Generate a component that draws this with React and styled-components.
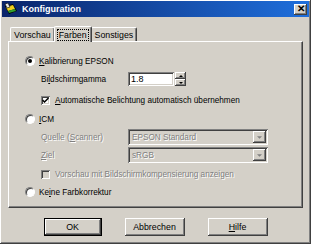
import React from "react";
import styled, { createGlobalStyle, css } from "styled-components";

const GlobalStyle = createGlobalStyle`
  html, body { margin: 0; padding: 0; background: #d4d0c8; }
  body { font-family: "Liberation Sans", Arial, sans-serif; font-size: 8.2px; color: #000; }
`;

const bevelOut = css`
  box-shadow: inset -1px -1px #404040, inset 1px 1px #fff, inset -2px -2px #808080, inset 2px 2px #d4d0c8;
`;
const bevelIn = css`
  box-shadow: inset 1px 1px #808080, inset -1px -1px #fff, inset 2px 2px #404040, inset -2px -2px #d4d0c8;
`;

const Window = styled.div`
  width: 311px;
  height: 244px;
  box-sizing: border-box;
  padding: 2px;
  background: #d4d0c8;
  display: flex;
  flex-direction: column;
  ${bevelOut}
`;

const TitleBar = styled.div`
  height: 16px;
  margin-top: -1px;
  display: flex;
  align-items: center;
  padding: 0 2px 0 2px;
  background: linear-gradient(to right, #0a246a, #1f6fdc);
  color: #fff;
`;

const TitleText = styled.span`
  font-weight: bold;
  font-size: 9px;
  margin-left: 4px;
  flex: 1;
`;

const CloseBtn = styled.div`
  width: 13px;
  height: 11px;
  background: #d4d0c8;
  ${bevelOut}
  display: flex;
  align-items: center;
  justify-content: center;
  color: #000;
  font-weight: bold;
  font-size: 10px;
  line-height: 1;
`;

const Body = styled.div`
  padding: 8px 6px 0 6px;
  display: flex;
  flex-direction: column;
`;

const TabRow = styled.div`
  display: flex;
  align-items: flex-end;
  padding-left: 2px;
  height: 16px;
`;

const Tab = styled.div`
  position: relative;
  box-sizing: border-box;
  height: ${(p) => (p.$active ? 16 : 14)}px;
  padding: 0 3px;
  margin: 0 ${(p) => (p.$active ? -1 : 0)}px ${(p) => (p.$active ? -1 : 0)}px;
  z-index: ${(p) => (p.$active ? 2 : 1)};
  background: #d4d0c8;
  border-top: 1px solid #fff;
  border-left: 1px solid #fff;
  border-right: 1px solid #404040;
  border-top-left-radius: 2px;
  border-top-right-radius: 2px;
  box-shadow: inset -1px 0 #808080;
  display: flex;
  align-items: center;
  font-size: 8.8px;
`;

const Focus = styled.span`
  outline: 1px dotted #000;
  padding: 0 1px;
`;

const Panel = styled.div`
  height: 167px;
  box-sizing: border-box;
  border-top: 1px solid #fff;
  border-left: 1px solid #fff;
  border-right: 1px solid #404040;
  border-bottom: 1px solid #404040;
  box-shadow: inset -1px -1px #808080;
  padding: 12px 0 0 16px;
  display: flex;
  flex-direction: column;
`;

const Row = styled.div`
  display: flex;
  align-items: center;
  height: ${(p) => p.$h || 14}px;
  margin-top: ${(p) => p.$mt || 0}px;
  padding-left: ${(p) => (p.$indent ? 16 : 0)}px;
`;

const Radio = styled.span`
  width: 10px;
  height: 10px;
  border-radius: 50%;
  box-sizing: border-box;
  background: #fff;
  border: 1px solid;
  border-color: #808080 #fff #fff #808080;
  box-shadow: inset 1px 1px #404040;
  display: flex;
  align-items: center;
  justify-content: center;
  margin-right: 4px;
  flex-shrink: 0;
  &::after {
    content: "";
    width: 4px;
    height: 4px;
    border-radius: 50%;
    background: ${(p) => (p.$checked ? "#000" : "transparent")};
  }
`;

const Check = styled.span`
  width: 9px;
  height: 9px;
  box-sizing: border-box;
  background: ${(p) => (p.$disabled ? "#d4d0c8" : "#fff")};
  ${bevelIn}
  margin-right: 5px;
  flex-shrink: 0;
  display: flex;
  align-items: center;
  justify-content: center;
`;

const Label = styled.span`
  white-space: nowrap;
  ${(p) =>
    p.$disabled &&
    css`
      color: #808080;
      text-shadow: 1px 1px #fff;
    `}
`;

const FieldLabel = styled(Label)`
  width: 87px;
`;

const TextInput = styled.div`
  width: 46px;
  height: 14px;
  box-sizing: border-box;
  background: #fff;
  ${bevelIn}
  padding: 0 3px;
  display: flex;
  align-items: center;
  font-size: 9px;
`;

const Spin = styled.div`
  display: flex;
  flex-direction: column;
  margin-left: 1px;
`;

const SpinBtn = styled.div`
  width: 11px;
  height: 7px;
  box-sizing: border-box;
  background: #d4d0c8;
  ${bevelOut}
  display: flex;
  align-items: center;
  justify-content: center;
`;

const Select = styled.div`
  width: 140px;
  height: 16px;
  box-sizing: border-box;
  background: #d4d0c8;
  ${bevelIn}
  display: flex;
  align-items: center;
  padding: 2px 2px 2px 4px;
`;

const SelectText = styled(Label)`
  flex: 1;
`;

const DropBtn = styled.div`
  width: 13px;
  height: 12px;
  box-sizing: border-box;
  background: #d4d0c8;
  ${bevelOut}
  display: flex;
  align-items: center;
  justify-content: center;
`;

const ButtonRow = styled.div`
  display: flex;
  justify-content: center;
  gap: 23px;
  margin-top: 10px;
`;

const Button = styled.div`
  width: ${(p) => p.$w || 60}px;
  height: 18px;
  box-sizing: border-box;
  background: #d4d0c8;
  display: flex;
  align-items: center;
  justify-content: center;
  font-size: 8.8px;
  ${(p) =>
    p.$default
      ? css`
          border: 1px solid #000;
          box-shadow: inset -1px -1px #404040, inset 1px 1px #fff, inset -2px -2px #808080;
        `
      : bevelOut}
`;

const Arrow = ({ up, color = "#000", w = 5 }) => (
  <svg width={w} height={Math.ceil(w / 2)} viewBox="0 0 6 3">
    <polygon points={up ? "0,3 6,3 3,0" : "0,0 6,0 3,3"} fill={color} />
  </svg>
);

const AppIcon = () => (
  <svg width="14" height="13" viewBox="0 0 14 13">
    <polygon points="1,3 9,1 13,8 5,11" fill="#000" />
    <polygon points="2,4 9,2 11,6 4,8" fill="#f0d020" />
    <polygon points="4,8 11,6 12,8 5,10" fill="#30a030" />
    <polygon points="1,1 4,0 6,4 3,5" fill="#e8e8e8" stroke="#000" strokeWidth="0.6" />
  </svg>
);

const U = styled.span`
  text-decoration: underline;
`;

export default function App() {
  return (
    <>
      <GlobalStyle />
      <Window>
        <TitleBar>
          <AppIcon />
          <TitleText>Konfiguration</TitleText>
          <CloseBtn>✕</CloseBtn>
        </TitleBar>
        <Body>
          <TabRow>
            <Tab>Vorschau</Tab>
            <Tab $active>
              <Focus>Farben</Focus>
            </Tab>
            <Tab>Sonstiges</Tab>
          </TabRow>
          <Panel>
            <Row>
              <Radio $checked />
              <Label>
                <U>K</U>alibrierung EPSON
              </Label>
            </Row>
            <Row $h={16} $mt={3} $indent>
              <FieldLabel>
                Bi<U>l</U>dschirmgamma
              </FieldLabel>
              <TextInput>1.8</TextInput>
              <Spin>
                <SpinBtn>
                  <Arrow up w={4} />
                </SpinBtn>
                <SpinBtn>
                  <Arrow w={4} />
                </SpinBtn>
              </Spin>
            </Row>
            <Row $mt={6} $indent>
              <Check>
                <svg width="7" height="7" viewBox="0 0 7 7">
                  <polyline points="0.5,3 2.5,5 6.5,1" fill="none" stroke="#000" strokeWidth="1.5" />
                </svg>
              </Check>
              <Label>
                <U>A</U>utomatische Belichtung automatisch übernehmen
              </Label>
            </Row>
            <Row $mt={5}>
              <Radio />
              <Label>
                <U>I</U>CM
              </Label>
            </Row>
            <Row $h={16} $mt={3} $indent>
              <FieldLabel $disabled>
                Quelle (<U>S</U>canner)
              </FieldLabel>
              <Select>
                <SelectText $disabled>EPSON Standard</SelectText>
                <DropBtn>
                  <Arrow color="#808080" />
                </DropBtn>
              </Select>
            </Row>
            <Row $h={16} $mt={2} $indent>
              <FieldLabel $disabled>
                <U>Z</U>iel
              </FieldLabel>
              <Select>
                <SelectText $disabled>sRGB</SelectText>
                <DropBtn>
                  <Arrow color="#808080" />
                </DropBtn>
              </Select>
            </Row>
            <Row $mt={4} $indent>
              <Check $disabled />
              <Label $disabled>Vorschau mit Bildschirmkompensierung anzeigen</Label>
            </Row>
            <Row $mt={4}>
              <Radio />
              <Label>
                Ke<U>i</U>ne Farbkorrektur
              </Label>
            </Row>
          </Panel>
          <ButtonRow>
            <Button $default $w={58}>OK</Button>
            <Button>Abbrechen</Button>
            <Button>
              <span>
                <U>H</U>ilfe
              </span>
            </Button>
          </ButtonRow>
        </Body>
      </Window>
    </>
  );
}
